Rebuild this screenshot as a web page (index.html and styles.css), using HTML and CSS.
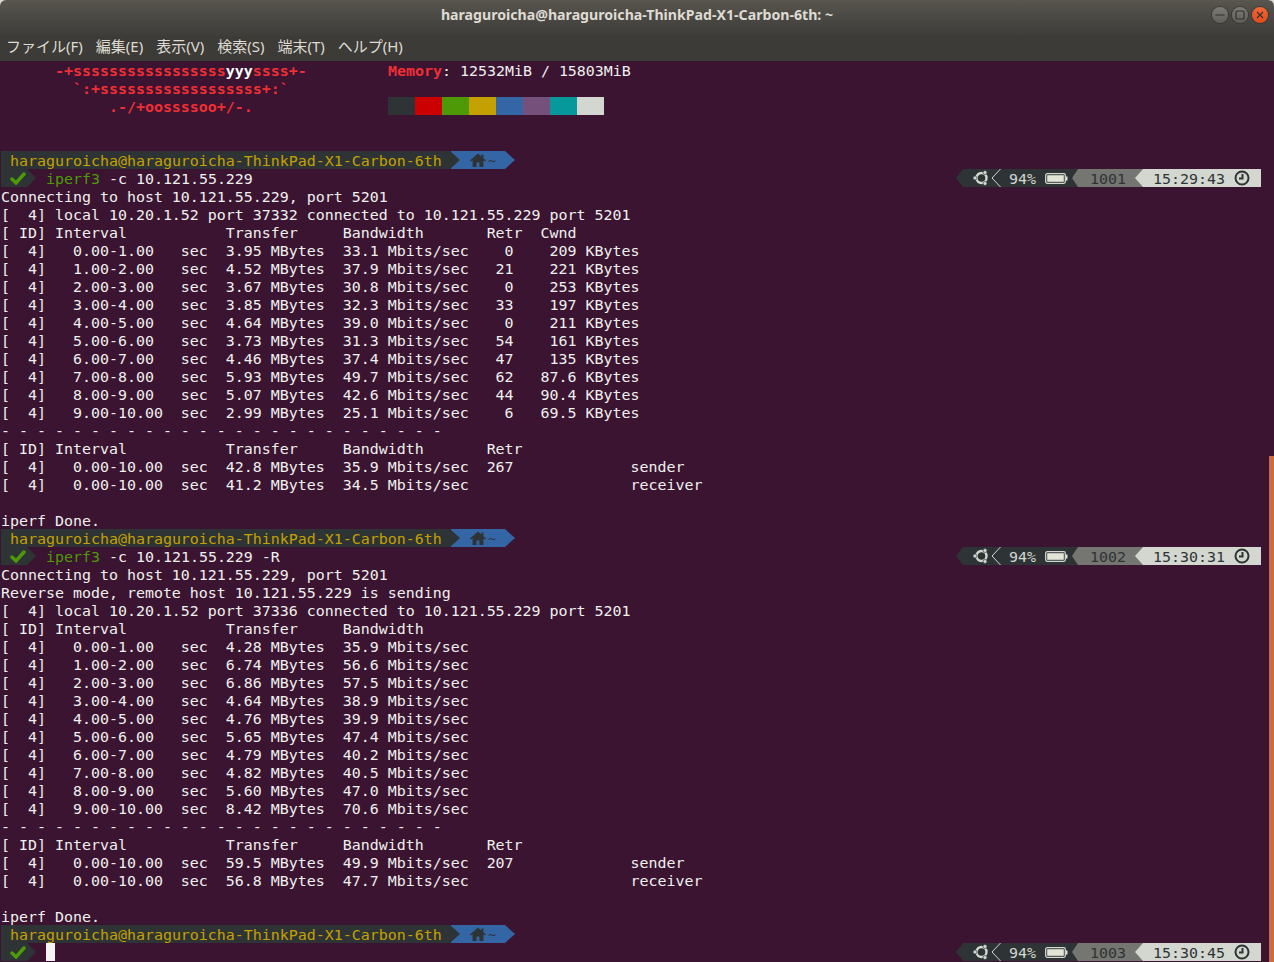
FILE: index.html
```html
<!DOCTYPE html>
<html lang="ja">

<head>
    <meta charset="UTF-8">
    <meta name="viewport" content="width=device-width, initial-scale=1.0">
    <title>Terminal</title>
    <link rel="stylesheet" href="styles.css">
</head>

<body>
    <div class="window">
        <header class="titlebar">
            <span></span>
            <h1>haraguroicha@haraguroicha-ThinkPad-X1-Carbon-6th: ~</h1>
            <div class="win-buttons">
                <button class="win-btn"><svg viewBox="0 0 16 16"><path d="M3.5 8h9" /></svg></button>
                <button class="win-btn"><svg viewBox="0 0 16 16"><rect x="4" y="4" width="8" height="8" rx="1" /></svg></button>
                <button class="win-btn close"><svg viewBox="0 0 16 16"><path d="M5 5l6 6M11 5l-6 6" /></svg></button>
            </div>
        </header>

        <nav class="menubar">
            <span>ファイル(F)</span>
            <span>編集(E)</span>
            <span>表示(V)</span>
            <span>検索(S)</span>
            <span>端末(T)</span>
            <span>ヘルプ(H)</span>
        </nav>

        <main class="terminal">
            <div class="row"><pre class="logo-col">      <b class="red">-+sssssssssssssssss</b><b class="white">yyy</b><b class="red">ssss+-</b></pre><pre><b class="red">Memory</b>: 12532MiB / 15803MiB</pre></div>
            <div class="row"><pre class="logo-col">        <b class="red">`:+ssssssssssssssssss+:`</b></pre></div>
            <div class="row"><pre class="logo-col">            <b class="red">.-/+oossssoo+/-.</b></pre>
                <div class="swatches">
                    <i class="c0"></i><i class="c1"></i><i class="c2"></i><i class="c3"></i><i class="c4"></i><i class="c5"></i><i class="c6"></i><i class="c7"></i>
                </div>
            </div>
            <div class="row"></div>
            <div class="row"></div>

            <!-- first run -->
            <div class="row">
                <div class="seg-host"><pre>haraguroicha@haraguroicha-ThinkPad-X1-Carbon-6th</pre></div>
                <div class="seg-home">
                    <svg class="home" viewBox="0 0 16 14"><path d="M8 .5 0 7.6l.9 1L2.6 7.2V14h4V9.4h2.8V14h4V7.2l1.7 1.4.9-1-2.6-2.3V1.400h-2v2.200z" /></svg>
                    <span class="tilde">~</span>
                </div>
            </div>
            <div class="row">
                <div class="seg-check"><svg class="check" viewBox="0 0 16 13"><path d="M2 7l4 4 8-9" /></svg></div>
                <pre class="cmd"><span class="green">iperf3</span> -c 10.121.55.229</pre>
                <div class="rprompt">
                    <div class="seg-sys">
                        <svg class="ubuntu" viewBox="0 0 18 18"><circle cx="9.500" cy="9" r="5" /><circle class="dot" cx="3" cy="9" r="2" /><circle class="dot" cx="13" cy="3.500" r="2" /><circle class="dot" cx="13" cy="14.500" r="2" /></svg>
                        <svg class="chev" viewBox="0 0 10 18"><path d="M9.500 0 1 9l8.500 9" /></svg>
                        <pre class="pct">94%</pre>
                        <svg class="battery" viewBox="0 0 23 11"><rect x=".7" y=".7" width="19.6" height="9.6" rx="1.5" /><rect class="fill" x="2.200" y="2.200" width="16.600" height="6.600" /><path class="fill" d="M21 3.500h1.500v4H21z" /></svg>
                    </div>
                    <div class="seg-hist"><pre>1001</pre></div>
                    <div class="seg-time">
                        <pre>15:29:43</pre>
                        <svg class="clock" viewBox="0 0 16 16"><circle cx="8" cy="8" r="6.5" /><path d="M8.500 4v4.500H5" /></svg>
                    </div>
                </div>
            </div>
<pre>Connecting to host 10.121.55.229, port 5201
[  4] local 10.20.1.52 port 37332 connected to 10.121.55.229 port 5201
[ ID] Interval           Transfer     Bandwidth       Retr  Cwnd
[  4]   0.00-1.00   sec  3.95 MBytes  33.1 Mbits/sec    0    209 KBytes
[  4]   1.00-2.00   sec  4.52 MBytes  37.9 Mbits/sec   21    221 KBytes
[  4]   2.00-3.00   sec  3.67 MBytes  30.8 Mbits/sec    0    253 KBytes
[  4]   3.00-4.00   sec  3.85 MBytes  32.3 Mbits/sec   33    197 KBytes
[  4]   4.00-5.00   sec  4.64 MBytes  39.0 Mbits/sec    0    211 KBytes
[  4]   5.00-6.00   sec  3.73 MBytes  31.3 Mbits/sec   54    161 KBytes
[  4]   6.00-7.00   sec  4.46 MBytes  37.4 Mbits/sec   47    135 KBytes
[  4]   7.00-8.00   sec  5.93 MBytes  49.7 Mbits/sec   62   87.6 KBytes
[  4]   8.00-9.00   sec  5.07 MBytes  42.6 Mbits/sec   44   90.4 KBytes
[  4]   9.00-10.00  sec  2.99 MBytes  25.1 Mbits/sec    6   69.5 KBytes
- - - - - - - - - - - - - - - - - - - - - - - - -
[ ID] Interval           Transfer     Bandwidth       Retr
[  4]   0.00-10.00  sec  42.8 MBytes  35.9 Mbits/sec  267             sender
[  4]   0.00-10.00  sec  41.2 MBytes  34.5 Mbits/sec                  receiver

iperf Done.</pre>

            <!-- second run -->
            <div class="row">
                <div class="seg-host"><pre>haraguroicha@haraguroicha-ThinkPad-X1-Carbon-6th</pre></div>
                <div class="seg-home">
                    <svg class="home" viewBox="0 0 16 14"><path d="M8 .5 0 7.6l.9 1L2.6 7.2V14h4V9.4h2.8V14h4V7.2l1.7 1.4.9-1-2.6-2.3V1.400h-2v2.200z" /></svg>
                    <span class="tilde">~</span>
                </div>
            </div>
            <div class="row">
                <div class="seg-check"><svg class="check" viewBox="0 0 16 13"><path d="M2 7l4 4 8-9" /></svg></div>
                <pre class="cmd"><span class="green">iperf3</span> -c 10.121.55.229 -R</pre>
                <div class="rprompt">
                    <div class="seg-sys">
                        <svg class="ubuntu" viewBox="0 0 18 18"><circle cx="9.500" cy="9" r="5" /><circle class="dot" cx="3" cy="9" r="2" /><circle class="dot" cx="13" cy="3.500" r="2" /><circle class="dot" cx="13" cy="14.500" r="2" /></svg>
                        <svg class="chev" viewBox="0 0 10 18"><path d="M9.500 0 1 9l8.500 9" /></svg>
                        <pre class="pct">94%</pre>
                        <svg class="battery" viewBox="0 0 23 11"><rect x=".7" y=".7" width="19.6" height="9.6" rx="1.5" /><rect class="fill" x="2.200" y="2.200" width="16.600" height="6.600" /><path class="fill" d="M21 3.500h1.500v4H21z" /></svg>
                    </div>
                    <div class="seg-hist"><pre>1002</pre></div>
                    <div class="seg-time">
                        <pre>15:30:31</pre>
                        <svg class="clock" viewBox="0 0 16 16"><circle cx="8" cy="8" r="6.5" /><path d="M8.500 4v4.500H5" /></svg>
                    </div>
                </div>
            </div>
<pre>Connecting to host 10.121.55.229, port 5201
Reverse mode, remote host 10.121.55.229 is sending
[  4] local 10.20.1.52 port 37336 connected to 10.121.55.229 port 5201
[ ID] Interval           Transfer     Bandwidth
[  4]   0.00-1.00   sec  4.28 MBytes  35.9 Mbits/sec
[  4]   1.00-2.00   sec  6.74 MBytes  56.6 Mbits/sec
[  4]   2.00-3.00   sec  6.86 MBytes  57.5 Mbits/sec
[  4]   3.00-4.00   sec  4.64 MBytes  38.9 Mbits/sec
[  4]   4.00-5.00   sec  4.76 MBytes  39.9 Mbits/sec
[  4]   5.00-6.00   sec  5.65 MBytes  47.4 Mbits/sec
[  4]   6.00-7.00   sec  4.79 MBytes  40.2 Mbits/sec
[  4]   7.00-8.00   sec  4.82 MBytes  40.5 Mbits/sec
[  4]   8.00-9.00   sec  5.60 MBytes  47.0 Mbits/sec
[  4]   9.00-10.00  sec  8.42 MBytes  70.6 Mbits/sec
- - - - - - - - - - - - - - - - - - - - - - - - -
[ ID] Interval           Transfer     Bandwidth       Retr
[  4]   0.00-10.00  sec  59.5 MBytes  49.9 Mbits/sec  207             sender
[  4]   0.00-10.00  sec  56.8 MBytes  47.7 Mbits/sec                  receiver

iperf Done.</pre>

            <!-- current prompt -->
            <div class="row">
                <div class="seg-host"><pre>haraguroicha@haraguroicha-ThinkPad-X1-Carbon-6th</pre></div>
                <div class="seg-home">
                    <svg class="home" viewBox="0 0 16 14"><path d="M8 .5 0 7.6l.9 1L2.6 7.2V14h4V9.4h2.8V14h4V7.2l1.7 1.4.9-1-2.6-2.3V1.400h-2v2.200z" /></svg>
                    <span class="tilde">~</span>
                </div>
            </div>
            <div class="row">
                <div class="seg-check"><svg class="check" viewBox="0 0 16 13"><path d="M2 7l4 4 8-9" /></svg></div>
                <div class="cursor"></div>
                <div class="rprompt">
                    <div class="seg-sys">
                        <svg class="ubuntu" viewBox="0 0 18 18"><circle cx="9.500" cy="9" r="5" /><circle class="dot" cx="3" cy="9" r="2" /><circle class="dot" cx="13" cy="3.500" r="2" /><circle class="dot" cx="13" cy="14.500" r="2" /></svg>
                        <svg class="chev" viewBox="0 0 10 18"><path d="M9.500 0 1 9l8.500 9" /></svg>
                        <pre class="pct">94%</pre>
                        <svg class="battery" viewBox="0 0 23 11"><rect x=".7" y=".7" width="19.6" height="9.6" rx="1.5" /><rect class="fill" x="2.200" y="2.200" width="16.600" height="6.600" /><path class="fill" d="M21 3.500h1.500v4H21z" /></svg>
                    </div>
                    <div class="seg-hist"><pre>1003</pre></div>
                    <div class="seg-time">
                        <pre>15:30:45</pre>
                        <svg class="clock" viewBox="0 0 16 16"><circle cx="8" cy="8" r="6.5" /><path d="M8.500 4v4.500H5" /></svg>
                    </div>
                </div>
            </div>

            <div class="scrollbar"></div>
        </main>
    </div>
</body>

</html>
```

FILE: styles.css
```css
* {
    margin: 0;
    padding: 0;
    box-sizing: border-box;
}

html, body {
    height: 100%;
    overflow: hidden;
    background: #d8d8d4;
}

.window {
    height: 962px;
    display: flex;
    flex-direction: column;
    border-radius: 6px 6px 0 0;
    overflow: hidden;
}

/* title bar */
.titlebar {
    height: 36px;
    display: grid;
    grid-template-columns: 1fr auto 1fr;
    align-items: center;
    background: linear-gradient(#5a574f 0, #56534c 3px, #454440 24px, #3e3d39 36px);
    padding-bottom: 7px;
}

.titlebar h1 {
    font-family: "Noto Sans", "Noto Sans CJK JP", sans-serif;
    font-size: 14.15px;
    font-weight: 700;
    color: #dfdbd2;
    white-space: nowrap;
}

.win-buttons {
    justify-self: end;
    display: flex;
    gap: 4px;
    padding-right: 6px;
}

.win-btn {
    width: 16px;
    height: 16px;
    border: none;
    border-radius: 50%;
    background: linear-gradient(#7c7b76, #5f5e59);
    box-shadow: 0 0 0 1px rgba(40, 40, 36, 0.5);
}

.win-btn svg {
    display: block;
    width: 16px;
    height: 16px;
    fill: none;
    stroke: #33322e;
    stroke-width: 1.2;
}

.win-btn.close {
    background: linear-gradient(#f0683a, #df4c1a);
}

/* menu */
.menubar {
    height: 25px;
    display: flex;
    align-items: center;
    gap: 13px;
    padding: 0 0 6px 6px;
    background: #3c3b37;
    font-family: "Noto Sans", "Noto Sans CJK JP", sans-serif;
    font-size: 15px;
    color: #dfdbd2;
}

/* terminal */
.terminal {
    position: relative;
    flex: 1;
    padding-left: 1px;
    background: #3a1430;
    color: #f0f0ee;
}

pre {
    font-family: "DejaVu Sans Mono", monospace;
    font-size: 14.95px;
    line-height: 18px;
    white-space: pre;
    padding-top: 1px;
    margin-bottom: -1px;
}

.row {
    height: 18px;
    display: flex;
}

.logo-col {
    width: 387px;
    flex: none;
}

.red {
    color: #ef2f35;
}

.white {
    color: #ffffff;
}

.green {
    color: #4e9a06;
}

.swatches {
    display: flex;
}

.swatches i {
    width: 27px;
    height: 18px;
}

.c0 { background: #2e3436; }
.c1 { background: #cc0000; }
.c2 { background: #4e9a06; }
.c3 { background: #c4a000; }
.c4 { background: #3465a4; }
.c5 { background: #75507b; }
.c6 { background: #06989a; }
.c7 { background: #d3d7cf; }

/* left prompt */
.seg-host {
    width: 459px;
    height: 18px;
    padding-left: 9px;
    color: #c4a000;
    background: #2e3436;
    clip-path: polygon(0 0, 449px 0, 100% 50%, 449px 100%, 0 100%);
    position: relative;
    z-index: 1;
}

.seg-home {
    width: 64px;
    height: 18px;
    margin-left: -9px;
    padding-left: 19px;
    display: flex;
    align-items: center;
    gap: 2px;
    background: #3465a4;
    clip-path: polygon(0 0, 54px 0, 100% 50%, 54px 100%, 0 100%);
}

.home {
    width: 16px;
    height: 14px;
    flex: none;
    fill: #2e3436;
}

.tilde {
    font-family: "DejaVu Sans Mono", monospace;
    font-size: 13px;
    color: #2e3436;
}

.seg-check {
    width: 35px;
    height: 18px;
    padding-left: 9px;
    display: flex;
    align-items: center;
    background: #2e3436;
    clip-path: polygon(0 0, 26px 0, 100% 50%, 26px 100%, 0 100%);
}

.check {
    width: 16px;
    height: 13px;
    fill: none;
    stroke: #4e9a06;
    stroke-width: 3.4;
    stroke-linecap: round;
}

.cmd {
    margin-left: 10px;
}

.cursor {
    width: 9px;
    height: 18px;
    margin-left: 10px;
    background: #f4f4f2;
}

/* right prompt */
.rprompt {
    margin-left: auto;
    margin-right: 13px;
    display: flex;
}

.seg-sys {
    width: 122px;
    height: 18px;
    padding-left: 16px;
    display: flex;
    align-items: center;
    color: #d3d7cf;
    background: #2e3436;
    clip-path: polygon(0 50%, 7px 0, 100% 0, 100% 100%, 7px 100%);
}

.ubuntu {
    width: 18px;
    height: 18px;
    flex: none;
    fill: none;
    stroke: #d3d7cf;
    stroke-width: 2.4;
}

.ubuntu .dot {
    fill: #d3d7cf;
    stroke: #2e3436;
    stroke-width: 0.6;
}

.chev {
    width: 10px;
    height: 18px;
    flex: none;
    margin-left: 1px;
    fill: none;
    stroke: #d3d7cf;
    stroke-width: 1;
}

.pct {
    margin-left: 8px;
}

.battery {
    width: 23px;
    height: 11px;
    flex: none;
    margin-left: 9px;
    fill: none;
    stroke: #d3d7cf;
    stroke-width: 1.3;
}

.battery .fill {
    fill: #e2e4d6;
    stroke: none;
}

.seg-hist {
    width: 71px;
    height: 18px;
    margin-left: -6px;
    padding-left: 18px;
    color: #2e3436;
    background: #757571;
    clip-path: polygon(0 50%, 6px 0, 100% 0, 100% 100%, 6px 100%);
}

.seg-time {
    width: 126px;
    height: 18px;
    margin-left: -8px;
    padding-left: 18px;
    display: flex;
    align-items: center;
    color: #2e3436;
    background: #d3d7cf;
    clip-path: polygon(0 50%, 8px 0, 100% 0, 100% 100%, 8px 100%);
}

.clock {
    width: 16px;
    height: 16px;
    flex: none;
    margin-left: 9px;
    fill: none;
    stroke: #2e3436;
    stroke-width: 2;
}

.scrollbar {
    position: absolute;
    top: 395px;
    right: 0;
    bottom: 0;
    width: 5px;
    background: #cf6a43;
}
```
